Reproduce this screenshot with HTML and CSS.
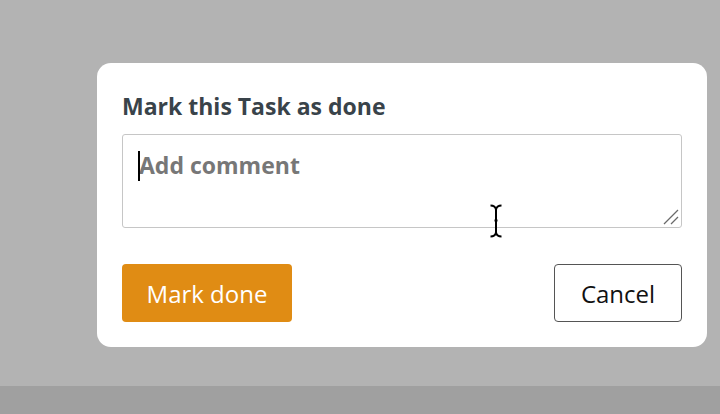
FILE: index.html
```html
<!DOCTYPE html>
<html lang="en">
<head>
<meta charset="utf-8">
<title>Mark this Task as done</title>
<link rel="stylesheet" href="styles.css">
</head>
<body>
<div class="page">
  <div class="overlay">
    <div class="modal">
      <h2 class="title">Mark this Task as done</h2>
      <div class="field">
        <textarea class="comment" placeholder="Add comment"></textarea>
        <span class="caret"></span>
        <svg class="grip" width="18" height="18" viewBox="0 0 18 18" aria-hidden="true">
          <path d="M2 16 L16 2 M9 16 L16 9" fill="none" stroke="#6a6a6a" stroke-width="1.3"/>
        </svg>
        <svg class="ibeam" width="14" height="34" viewBox="0 0 14 34" aria-hidden="true">
          <path d="M1.5 1.5 C4.5 1.5 6.5 3 7 5.5 C7.5 3 9.5 1.5 12.5 1.5 M7 5.5 V28.5 M1.5 32.5 C4.5 32.5 6.5 31 7 28.5 C7.5 31 9.5 32.5 12.5 32.5 M5.5 16.5 H8.5" fill="none" stroke="#000" stroke-width="2"/>
        </svg>
      </div>
      <div class="actions">
        <button class="btn btn-primary" type="button">Mark done</button>
        <button class="btn btn-secondary" type="button">Cancel</button>
      </div>
    </div>
  </div>
  <div class="strip"></div>
</div>
</body>
</html>
```

FILE: styles.css
```css
html, body {
  margin: 0;
  padding: 0;
}
body {
  width: 720px;
  height: 414px;
  overflow: hidden;
  background: #b3b3b3;
  font-family: "Open Sans", Lato, sans-serif;
}
.page {
  display: flex;
  flex-direction: column;
  height: 414px;
}
.overlay {
  height: 386px;
  padding: 63px 0 0 97px;
  box-sizing: border-box;
}
.strip {
  flex: 1;
  background: #a0a0a0;
}
.modal {
  width: 610px;
  height: 284px;
  box-sizing: border-box;
  background: #fff;
  border-radius: 14px;
  padding: 29px 25px 25px;
  display: flex;
  flex-direction: column;
}
.title {
  margin: 0;
  font-size: 23px;
  line-height: 28px;
  font-weight: 700;
  color: #39434a;
}
.field {
  position: relative;
  margin-top: 14px;
  height: 94px;
}
.comment {
  display: block;
  width: 100%;
  height: 94px;
  box-sizing: border-box;
  border: 1px solid #c6c6c6;
  border-radius: 3px;
  padding: 16px 16px;
  font-family: "Open Sans", Lato, sans-serif;
  font-size: 23px;
  font-weight: 700;
  line-height: 28px;
  color: #333;
  outline: none;
  resize: none;
}
.comment::placeholder {
  color: #777;
  opacity: 1;
}
.caret {
  position: absolute;
  left: 16px;
  top: 17px;
  width: 2px;
  height: 30px;
  background: #000;
}
.grip {
  position: absolute;
  right: 2px;
  bottom: 2px;
}
.ibeam {
  position: absolute;
  left: 367px;
  top: 70px;
}
.actions {
  margin-top: 36px;
  display: flex;
  justify-content: space-between;
}
.btn {
  height: 58px;
  border-radius: 4px;
  font-family: "Open Sans", Lato, sans-serif;
  font-size: 24px;
  font-weight: 400;
  padding: 0;
  cursor: pointer;
}
.btn-primary {
  width: 170px;
  background: #e08c14;
  border: none;
  color: #fff;
}
.btn-secondary {
  width: 128px;
  background: #fff;
  border: 1px solid #555;
  color: #111;
}
```
